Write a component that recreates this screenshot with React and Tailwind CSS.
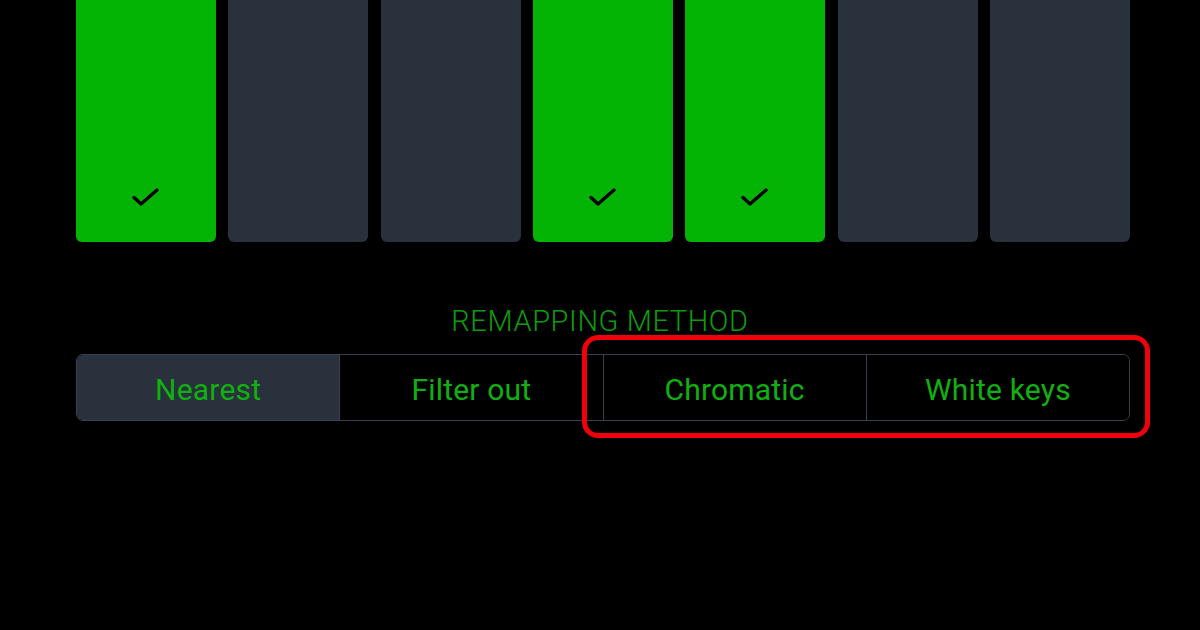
import { useState } from 'react'

const keys = [true, false, false, true, true, false, false]
const methods = ['Nearest', 'Filter out', 'Chromatic', 'White keys']

function Check() {
  return (
    <svg width="28" height="22" viewBox="0 0 28 22" fill="none">
      <path d="M2 11.5l7 6.5L25 4" stroke="#000" strokeWidth="3.4" strokeLinecap="round" strokeLinejoin="round" />
    </svg>
  )
}

export default function App() {
  const [selected, setSelected] = useState(0)

  return (
    <div className="w-[1200px] h-[630px] bg-black overflow-hidden" style={{ fontFamily: 'Roboto, "Liberation Sans", sans-serif' }}>
      {/* key toggles */}
      <div className="flex justify-between ml-[76px] w-[1054px]">
        {keys.map((on, i) => (
          <div
            key={i}
            className={`w-[140px] h-[242px] rounded-b-[6px] flex items-end justify-center pb-[34px] ${on ? 'bg-[#03b404]' : 'bg-[#29313c]'}`}
          >
            {on && <Check />}
          </div>
        ))}
      </div>

      {/* remapping method */}
      <div className="mt-[63px] flex flex-col items-center">
        <div className="text-[29px] font-light text-[#0c9c0c] leading-[32px] tracking-[0.6px]">REMAPPING METHOD</div>
      </div>
      <div className="relative mt-[17px] ml-[76px] w-[1054px]">
        <div className="flex h-[67px] rounded-[7px] border border-[#3a414c] overflow-hidden">
          {methods.map((m, i) => (
            <button
              key={m}
              onClick={() => setSelected(i)}
              className={`flex-1 flex items-center justify-center pt-[3px] text-[30px] text-[#10b010] tracking-[0.2px] ${i > 0 ? 'border-l border-[#3a414c]' : ''} ${selected === i ? 'bg-[#29313c]' : 'bg-black'}`}
            >
              {m}
            </button>
          ))}
        </div>
        <div className="absolute left-[506px] top-[-19px] w-[568px] h-[103px] rounded-[16px] border-[5px] border-[#f0000a] pointer-events-none" />
      </div>
    </div>
  )
}
